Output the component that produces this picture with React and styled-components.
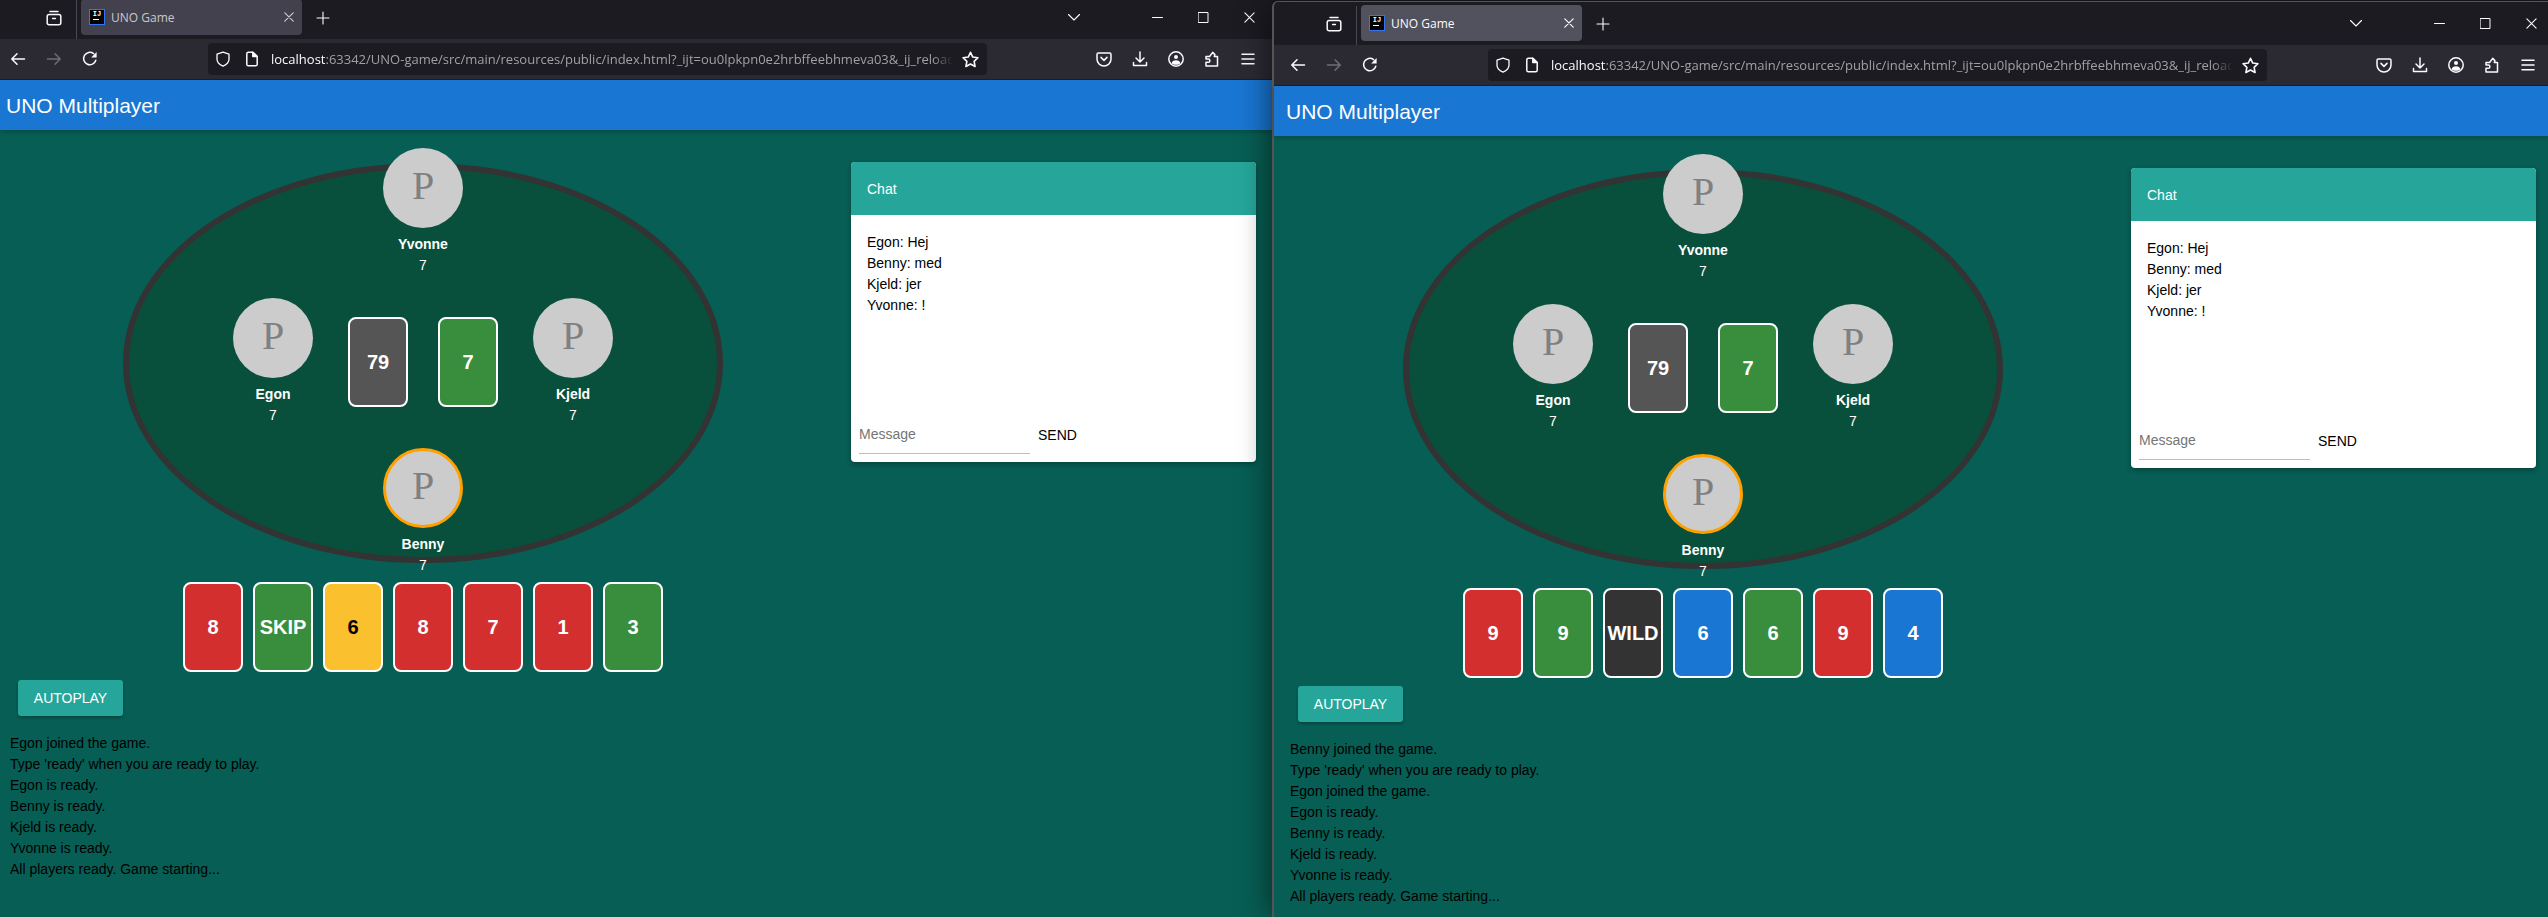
import React from 'react';
import styled, { createGlobalStyle } from 'styled-components';

const Global = createGlobalStyle`
  html, body { margin: 0; padding: 0; background: #1c1b22; }
  body { font-family: "Liberation Sans", Arial, sans-serif; font-size: 14px; }
`;

const Desktop = styled.div`
  display: flex;
  width: 2548px;
  height: 917px;
  overflow: hidden;
`;

const Win = styled.section`
  display: flex;
  flex-direction: column;
  box-sizing: border-box;
  flex: none;
  overflow: hidden;
  ${p => p.$active ? `
    --pl: 6px; --pr: 0px; --ctrl: 2px; --pt: 4px;
    width: 1276px;
    height: 916px;
    margin-top: 1px;
    border-top: 1px solid #555;
    border-left: 2px solid #555;
    border-top-left-radius: 6px;
    position: relative;
    z-index: 1;
    overflow: visible;
    box-shadow: 0 0 32px rgba(0,0,0,.6);
  ` : `
    --pl: 0px; --pr: 4px; --ctrl: 8px; --pt: 0px;
    width: 1272px;
    height: 917px;
  `}
`;

const TabBar = styled.div`
  display: flex;
  flex: none;
  box-sizing: border-box;
  height: calc(39px + var(--pt));
  padding: var(--pt) var(--ctrl) 0 var(--pl);
  background: #1c1b22;
  overflow: hidden;
  border-top-left-radius: inherit;
`;

const ViewCell = styled.div`
  display: flex;
  align-items: center;
  justify-content: center;
  width: 36px;
  height: 36px;
  margin-left: 36px;
`;

const TabSep = styled.div`
  width: 1px;
  height: 39px;
  margin: 0 4px;
  background: #4a4951;
`;

const Tab = styled.div`
  display: flex;
  align-items: center;
  box-sizing: border-box;
  width: 221px;
  height: 36px;
  margin-top: -1px;
  padding: 0 8px;
  border-radius: 4px;
  background: ${p => p.$active ? '#52525e' : '#42414d'};
  color: ${p => p.$active ? '#fbfbfe' : '#c9c9cd'};
  font: 12px "Open Sans", "Noto Sans", sans-serif;
`;

const Favicon = styled.span`
  display: flex;
  flex-direction: column;
  align-items: center;
  flex: none;
  box-sizing: border-box;
  width: 16px;
  height: 16px;
  margin-right: 6px;
  border: 1px solid #3574f0;
  background: #000;
  color: #fff;
  font: bold 7px/8px "Liberation Mono", monospace;
  &::after {
    content: "";
    width: 6px;
    height: 1px;
    margin: 1px 0 0 -3px;
    background: #fff;
  }
`;

const TabTitle = styled.span`
  flex: 1;
  white-space: nowrap;
`;

const TabClose = styled.span`
  display: flex;
  margin-right: 0;
`;

const NewTab = styled.div`
  display: flex;
  align-items: center;
  justify-content: center;
  width: 36px;
  height: 36px;
  margin-left: 3px;
`;

const Spacer = styled.div`
  flex: 1;
`;

const ControlCell = styled.div`
  display: flex;
  align-items: center;
  justify-content: center;
  width: 30px;
  height: 34px;
  margin-left: ${p => p.$gap || 0}px;
`;

const Toolbar = styled.div`
  display: flex;
  align-items: center;
  flex: none;
  box-sizing: border-box;
  height: 41px;
  padding: 0 var(--pr) 0 var(--pl);
  background: #2b2a33;
  border-bottom: 1px solid #1f1e26;
`;

const ToolButton = styled.div`
  display: flex;
  align-items: center;
  justify-content: center;
  flex: none;
  width: 36px;
  height: 32px;
`;

const UrlBar = styled.div`
  display: flex;
  align-items: center;
  flex: none;
  box-sizing: border-box;
  width: 779px;
  height: 32px;
  margin-left: 100px;
  padding: 0 8px 0 7px;
  background: #1c1b22;
  border-radius: 4px;
`;

const UrlIcon = styled.span`
  display: flex;
  margin-right: ${p => p.$gap}px;
`;

const UrlText = styled.div`
  flex: 1;
  min-width: 0;
  margin-right: 9px;
  white-space: nowrap;
  color: #a0a0a6;
  font: 13px/20px "Open Sans", "Noto Sans", sans-serif;
  -webkit-mask-image: linear-gradient(to right, #000 97%, transparent);
  mask-image: linear-gradient(to right, #000 97%, transparent);
  b { font-weight: 400; color: #fbfbfe; }
`;

const ToolEnd = styled.div`
  display: flex;
  margin-left: auto;
  margin-right: 2px;
`;

const AppBar = styled.header`
  display: flex;
  align-items: center;
  flex: none;
  box-sizing: border-box;
  height: 50px;
  padding: 2px 0 0 calc(var(--pl) + 6px);
  background: #1976d2;
  color: #fff;
  font-size: 21px;
  box-shadow: 0 2px 4px rgba(0,0,0,.2);
  position: relative;
`;

const Body = styled.main`
  display: flex;
  align-items: flex-start;
  flex: 1;
  box-sizing: border-box;
  padding: 32px 0 0 var(--pl);
  background: #075e54;
`;

const GameColumn = styled.div`
  width: 846px;
  flex: none;
`;

const Table = styled.div`
  position: relative;
  display: flex;
  align-items: center;
  justify-content: center;
  box-sizing: border-box;
  width: 600px;
  height: 400px;
  margin: 1px auto 0;
  border: 6px solid #333;
  border-radius: 50%;
  background: #08503c;
`;

const Piles = styled.div`
  display: flex;
  gap: 30px;
  margin-top: -2px;
`;

const Seat = styled.div`
  position: absolute;
  left: ${p => p.$x}px;
  top: ${p => p.$y}px;
  display: flex;
  flex-direction: column;
  align-items: center;
  width: 80px;
  color: #fff;
  line-height: 21px;
`;

const Avatar = styled.div`
  display: flex;
  align-items: center;
  justify-content: center;
  box-sizing: border-box;
  width: 80px;
  height: 80px;
  margin-bottom: 6px;
  padding-bottom: 6px;
  border-radius: 50%;
  border: ${p => p.$turn ? '3px solid #ffa000' : 'none'};
  background: #ccc;
  color: #808080;
  font: 40px "Liberation Serif", serif;
`;

const SeatName = styled.div`
  font-weight: 700;
`;

const Card = styled.div`
  display: flex;
  align-items: center;
  justify-content: center;
  flex: none;
  box-sizing: border-box;
  width: 60px;
  height: 90px;
  border: 2px solid #fff;
  border-radius: 8px;
  background: ${p => p.$bg};
  color: ${p => p.$ink || '#fff'};
  font-size: 20px;
  font-weight: 700;
`;

const Hand = styled.div`
  display: flex;
  justify-content: center;
  gap: 10px;
  margin-top: 19px;
`;

const AutoButton = styled.button`
  display: block;
  box-sizing: border-box;
  width: 105px;
  height: 36px;
  margin: 8px 0 0 18px;
  padding: 0;
  border: none;
  border-radius: 3px;
  background: #26a69a;
  color: #fff;
  font: 14px "Liberation Sans", Arial, sans-serif;
  box-shadow: 0 2px 3px rgba(0,0,0,.25);
`;

const Log = styled.div`
  margin-top: 17px;
  padding-left: 10px;
  color: #000;
  line-height: 21px;
`;

const Chat = styled.aside`
  display: flex;
  flex-direction: column;
  flex: none;
  box-sizing: border-box;
  width: 405px;
  height: 300px;
  margin-left: 5px;
  border-radius: 4px;
  overflow: hidden;
  background: #fff;
  box-shadow: 0 2px 5px rgba(0,0,0,.3);
`;

const ChatHeader = styled.div`
  display: flex;
  align-items: center;
  flex: none;
  height: 53px;
  padding-left: 16px;
  background: #26a69a;
  color: #fff;
`;

const ChatLines = styled.div`
  flex: 1;
  padding: 17px 16px 0;
  color: #000;
  line-height: 21px;
`;

const ChatForm = styled.form`
  display: flex;
  align-items: center;
  flex: none;
  gap: 8px;
  padding: 0 8px 8px;
  margin: 0;
`;

const ChatInput = styled.input`
  box-sizing: border-box;
  width: 171px;
  height: 39px;
  padding: 0;
  border: none;
  border-bottom: 1px solid #bdbdbd;
  outline: none;
  background: transparent;
  font: 14px "Liberation Sans", Arial, sans-serif;
  &::placeholder { color: #757575; opacity: 1; }
`;

const SendButton = styled.button`
  padding: 0;
  border: none;
  background: transparent;
  color: #000;
  font: 14px "Liberation Sans", Arial, sans-serif;
`;

const Glyph = styled.svg`
  display: block;
  flex: none;
  fill: none;
  stroke: ${p => p.$color || '#fbfbfe'};
  stroke-width: ${p => p.$w || 1.5};
  stroke-linecap: round;
  stroke-linejoin: round;
`;

const Ic = ({ size = 16, children, color, w, box = 16 }) => (
  <Glyph width={size} height={size} viewBox={`0 0 ${box} ${box}`} $color={color} $w={w}>{children}</Glyph>
);

const ViewIcon = () => (
  <Ic><path d="M4 1.6h8" /><rect x="1.2" y="4.4" width="13.6" height="10.4" rx="2" /><path d="M6.6 8.4h2.8" /></Ic>
);
const CloseIcon = ({ size = 10, w = 1.2, color }) => (
  <Ic size={size} box={10} w={w} color={color}><path d="M.8.8l8.4 8.4M9.2.8L.8 9.2" /></Ic>
);
const PlusIcon = () => (
  <Ic size={14} box={14} w={1.1}><path d="M7 1v12M1 7h12" /></Ic>
);
const ChevronIcon = () => (
  <Ic size={14} box={14} w={1.1}><path d="M1.5 4.5L7 10l5.5-5.5" /></Ic>
);
const MinIcon = () => (
  <Ic size={11} box={11} w={1}><path d="M.5 5.5h10" /></Ic>
);
const MaxIcon = () => (
  <Ic size={11} box={11} w={1}><rect x=".5" y=".5" width="9.5" height="10" /></Ic>
);
const BackIcon = ({ color }) => (
  <Ic color={color}><path d="M14.5 8H1.8M7 2.8L1.8 8 7 13.2" /></Ic>
);
const ForwardIcon = ({ color }) => (
  <Ic color={color}><path d="M1.5 8h12.7M9 2.8L14.2 8 9 13.2" /></Ic>
);
const ReloadIcon = () => (
  <Ic>
    <path d="M13.8 9.2A6.2 6.2 0 1 1 11.6 2.6" />
    <path d="M14.6 1v5.4H9.2z" fill="#fbfbfe" stroke="none" />
  </Ic>
);
const ShieldIcon = () => (
  <Ic w={1.3}><path d="M8 1.2l6 1.9v5.2c0 3.2-2.8 5.5-6 6.9-3.2-1.4-6-3.7-6-6.9V3.1z" /></Ic>
);
const PageIcon = () => (
  <Ic>
    <path d="M2.8 2.8A1.6 1.6 0 0 1 4.4 1.2h4.4l4.4 4.4v7.6a1.6 1.6 0 0 1-1.6 1.6H4.4a1.6 1.6 0 0 1-1.6-1.6z" />
    <path d="M8.8 1.2v4.4h4.4z" fill="#fbfbfe" />
  </Ic>
);
const StarIcon = () => (
  <Ic size={17}><path d="M8 1.2l2.1 4.5 4.9.6-3.6 3.4.9 4.9L8 12.2l-4.3 2.4.9-4.9L1 6.3l4.9-.6z" /></Ic>
);
const PocketIcon = () => (
  <Ic><path d="M2.4 2h11.2c.8 0 1.4.6 1.4 1.4V8A7 7 0 0 1 1 8V3.4C1 2.6 1.6 2 2.4 2z" /><path d="M5 6.4l3 3 3-3" /></Ic>
);
const DownloadIcon = () => (
  <Ic><path d="M8 1v10M4 7l4 4 4-4M1.5 11.5v3h13v-3" /></Ic>
);
const AccountIcon = () => (
  <Ic>
    <circle cx="8" cy="8" r="7.2" />
    <circle cx="8" cy="6" r="2" fill="#fbfbfe" stroke="none" />
    <path d="M3.6 12.2c.4-2 2-3 4.4-3s4 1 4.4 3c-1.2 1-2.7 1.6-4.4 1.6s-3.2-.6-4.4-1.6z" fill="#fbfbfe" stroke="none" />
  </Ic>
);
const PuzzleIcon = () => (
  <Ic><path d="M2 5.5h3.6L8.7 1.4l2.2 2.2-.6 1.9h3.2v9.4H2v-3.6h2.3a1.6 1.6 0 0 0 0-3.2H2z" /></Ic>
);
const MenuIcon = () => (
  <Ic><path d="M2 3.2h12M2 8h12M2 12.8h12" /></Ic>
);

const Chrome = ({ active }) => (
  <>
    <TabBar>
      <ViewCell><ViewIcon /></ViewCell>
      <TabSep />
      <Tab $active={active}>
        <Favicon>IJ</Favicon>
        <TabTitle>UNO Game</TabTitle>
        <TabClose><CloseIcon color={active ? '#fbfbfe' : '#c9c9cd'} /></TabClose>
      </Tab>
      <NewTab><PlusIcon /></NewTab>
      <Spacer />
      <ControlCell><ChevronIcon /></ControlCell>
      <ControlCell $gap={53}><MinIcon /></ControlCell>
      <ControlCell $gap={16}><MaxIcon /></ControlCell>
      <ControlCell $gap={16}><CloseIcon size={11} w={1} /></ControlCell>
    </TabBar>
    <Toolbar>
      <ToolButton><BackIcon /></ToolButton>
      <ToolButton><ForwardIcon color="#6f6e75" /></ToolButton>
      <ToolButton><ReloadIcon /></ToolButton>
      <UrlBar>
        <UrlIcon $gap={13}><ShieldIcon /></UrlIcon>
        <UrlIcon $gap={11}><PageIcon /></UrlIcon>
        <UrlText><b>localhost</b>:63342/UNO-game/src/main/resources/public/index.html?_ijt=ou0lpkpn0e2hrbffeebhmeva03&amp;_ij_reload</UrlText>
        <StarIcon />
      </UrlBar>
      <ToolEnd>
        <ToolButton><PocketIcon /></ToolButton>
        <ToolButton><DownloadIcon /></ToolButton>
        <ToolButton><AccountIcon /></ToolButton>
        <ToolButton><PuzzleIcon /></ToolButton>
        <ToolButton><MenuIcon /></ToolButton>
      </ToolEnd>
    </Toolbar>
  </>
);

const seats = [
  { name: 'Yvonne', x: 254, y: -21 },
  { name: 'Egon', x: 104, y: 129 },
  { name: 'Kjeld', x: 404, y: 129 },
  { name: 'Benny', x: 254, y: 279, turn: true },
];

const colors = { r: '#d32f2f', g: '#388e3c', y: '#fbc02d', b: '#1976d2', k: '#333' };

const GameWindow = ({ active, hand, log }) => (
  <Win $active={active}>
    <Chrome active={active} />
    <AppBar>UNO Multiplayer</AppBar>
    <Body>
      <GameColumn>
        <Table>
          {seats.map(s => (
            <Seat key={s.name} $x={s.x} $y={s.y}>
              <Avatar $turn={s.turn}>P</Avatar>
              <SeatName>{s.name}</SeatName>
              <div>7</div>
            </Seat>
          ))}
          <Piles>
            <Card $bg="#555">79</Card>
            <Card $bg={colors.g}>7</Card>
          </Piles>
        </Table>
        <Hand>
          {hand.map(([c, v], i) => (
            <Card key={i} $bg={colors[c]} $ink={c === 'y' ? '#000' : undefined}>{v}</Card>
          ))}
        </Hand>
        <AutoButton>AUTOPLAY</AutoButton>
        <Log>{log.map((l, i) => <div key={i}>{l}</div>)}</Log>
      </GameColumn>
      <Chat>
        <ChatHeader>Chat</ChatHeader>
        <ChatLines>
          <div>Egon: Hej</div>
          <div>Benny: med</div>
          <div>Kjeld: jer</div>
          <div>Yvonne: !</div>
        </ChatLines>
        <ChatForm>
          <ChatInput placeholder="Message" />
          <SendButton type="button">SEND</SendButton>
        </ChatForm>
      </Chat>
    </Body>
  </Win>
);

const rest = ['Egon is ready.', 'Benny is ready.', 'Kjeld is ready.', 'Yvonne is ready.', 'All players ready. Game starting...'];

export default function App() {
  return (
    <Desktop>
      <Global />
      <GameWindow
        hand={[['r', '8'], ['g', 'SKIP'], ['y', '6'], ['r', '8'], ['r', '7'], ['r', '1'], ['g', '3']]}
        log={['Egon joined the game.', "Type 'ready' when you are ready to play.", ...rest]}
      />
      <GameWindow
        active
        hand={[['r', '9'], ['g', '9'], ['k', 'WILD'], ['b', '6'], ['g', '6'], ['r', '9'], ['b', '4']]}
        log={['Benny joined the game.', "Type 'ready' when you are ready to play.", 'Egon joined the game.', ...rest]}
      />
    </Desktop>
  );
}
